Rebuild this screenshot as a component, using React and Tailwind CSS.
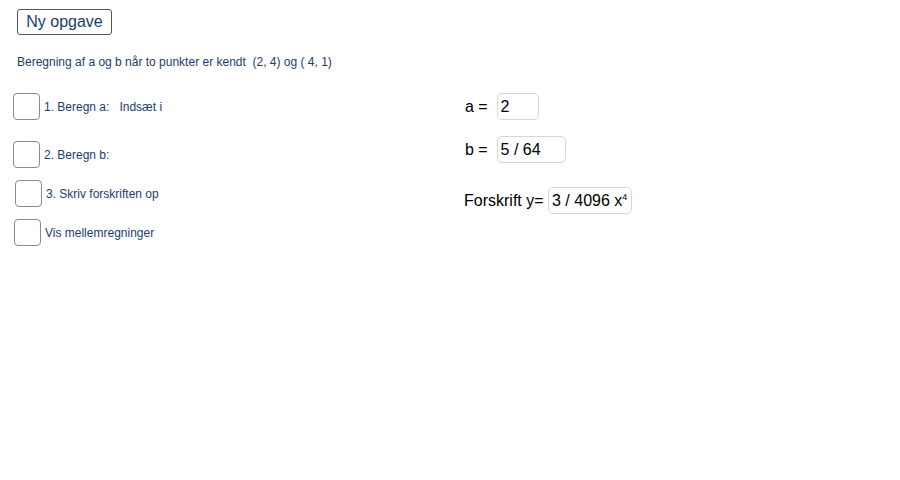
import React from 'react';

const Check = ({ label, className = '' }) => (
  <div className={`flex items-center ${className}`}>
    <div className="w-[27px] h-[27px] rounded-[4px] border-[1.5px] border-[#8a8a8a] bg-white shrink-0" />
    <span className="ml-[4px] text-[12px] leading-[16px] text-[#1c3c6a] whitespace-pre">{label}</span>
  </div>
);

const Field = ({ label, value, width, className = '' }) => (
  <div className={`flex items-center ${className}`}>
    <span className="text-[16px] text-black whitespace-pre">{label}</span>
    <div
      className={`h-[27px] ${width} rounded-[5px] border border-[#d6d6d6] bg-white flex items-center pl-[3px] text-[16px] text-black`}
    >
      {value}
    </div>
  </div>
);

export default function App() {
  return (
    <div className="w-[900px] h-[480px] bg-white font-['Liberation_Sans',Arial,sans-serif] overflow-hidden">
      <div className="pt-[9px] pl-[17px]">
        <button className="h-[26px] w-[95px] rounded-[3px] border-[1.5px] border-[#555555] bg-white text-[16px] text-[#1c3c6a] leading-none">
          Ny opgave
        </button>
        <p className="mt-[19px] text-[12px] leading-[16px] text-[#1c3c6a] whitespace-pre">
          Beregning af a og b når to punkter er kendt  (2, 4) og ( 4, 1)
        </p>
      </div>

      <div className="flex mt-[23px]">
        <div className="w-[450px] pl-[13px]">
          <Check label="1. Beregn a:   Indsæt i" />
          <Check label="2. Beregn b:" className="mt-[21px]" />
          <Check label="3. Skriv forskriften op" className="mt-[12px] ml-[2px]" />
          <Check label="Vis mellemregninger" className="mt-[12px] ml-[1px]" />
        </div>

        <div className="pl-[14px]">
          <Field label="a =  " value="2" width="w-[42px]" className="ml-[1px]" />
          <Field label="b =  " value="5 / 64" width="w-[69px]" className="mt-[16px] ml-[1px]" />
          <Field
            label="Forskrift y= "
            value={
              <span>
                3 / 4096 x<span className="text-[9px] align-[6px]">4</span>
              </span>
            }
            width="w-[84px]"
            className="mt-[24px]"
          />
        </div>
      </div>
    </div>
  );
}
